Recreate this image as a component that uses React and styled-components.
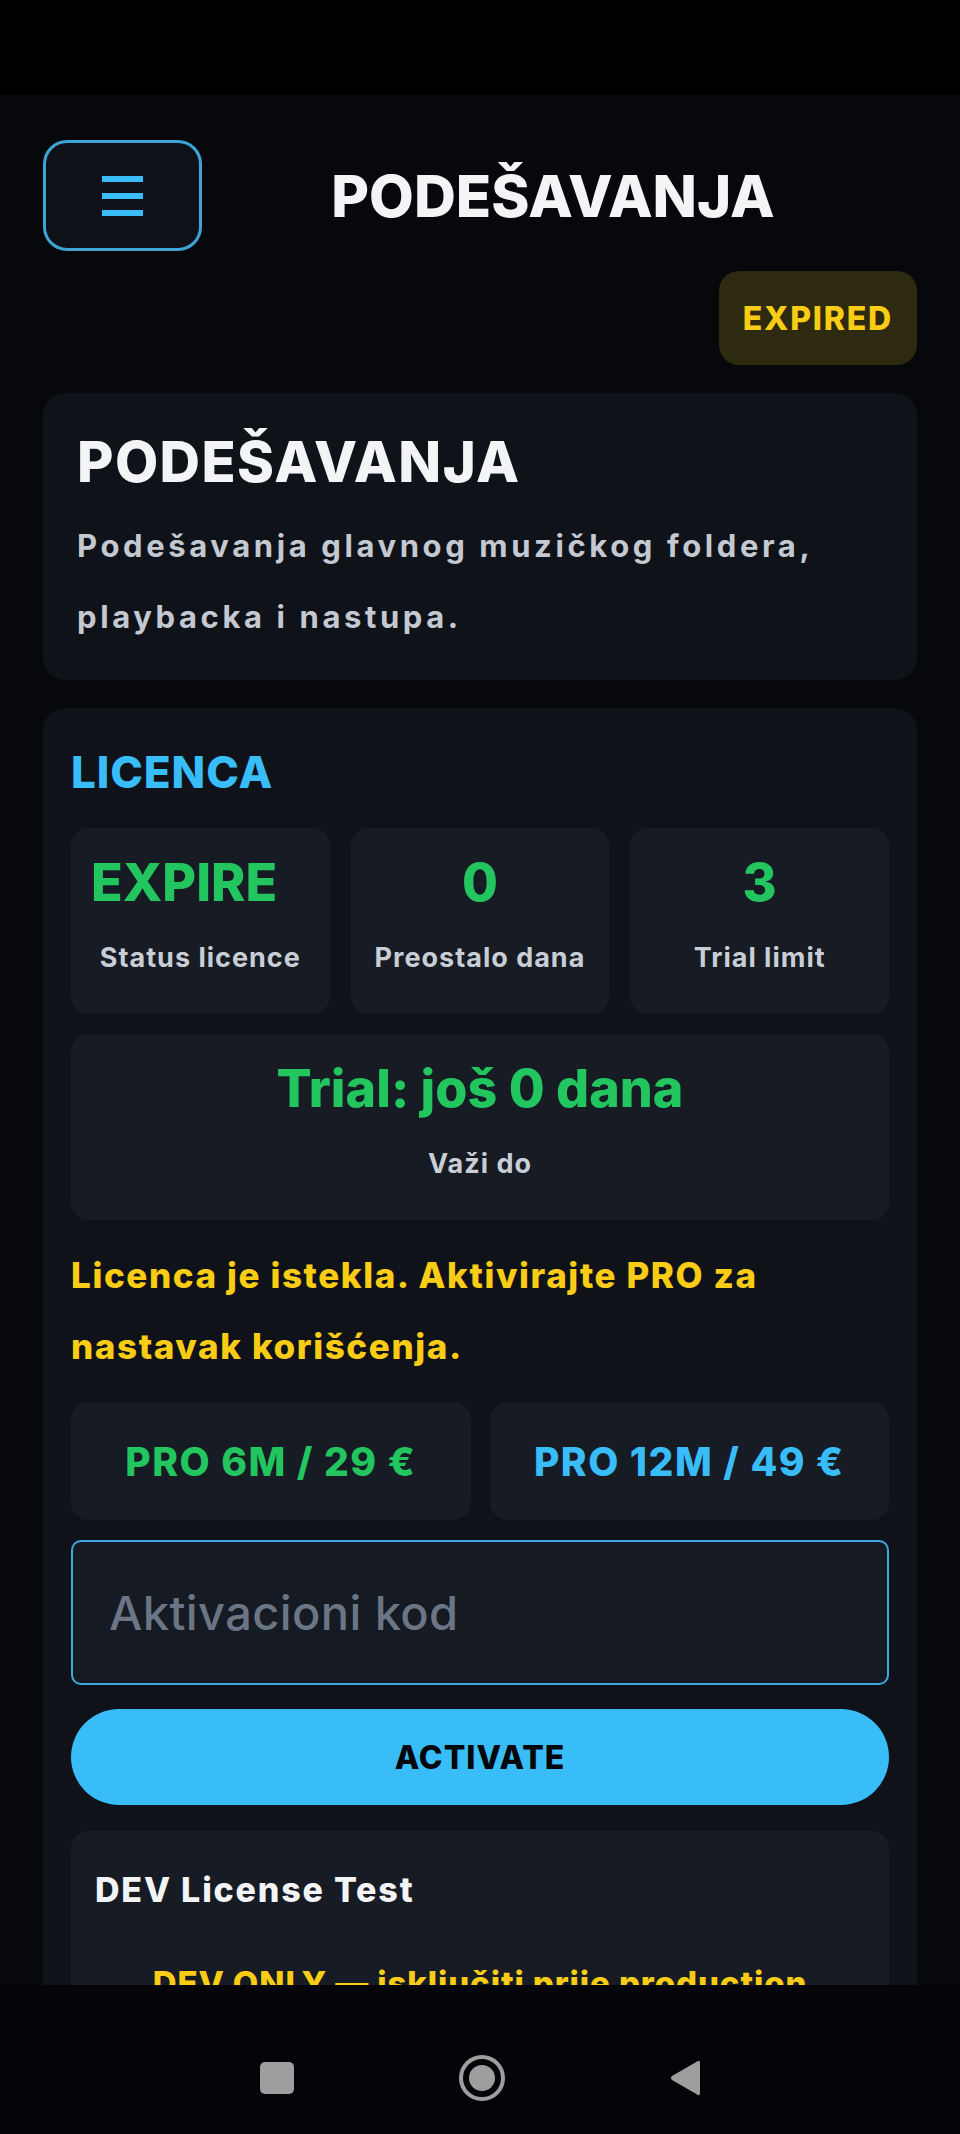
import styled, { createGlobalStyle } from "styled-components";

const GlobalStyle = createGlobalStyle`
  html, body {
    margin: 0;
    padding: 0;
    background: #000;
  }
  body {
    font-family: Inter, "Noto Sans", sans-serif;
  }
  * {
    box-sizing: border-box;
  }
`;

const Screen = styled.div`
  width: 960px;
  height: 2134px;
  display: flex;
  flex-direction: column;
  background: #000;
  overflow: hidden;
`;

const StatusBar = styled.div`
  flex: none;
  height: 95px;
  background: #000;
`;

const Viewport = styled.main`
  flex: 1;
  min-height: 0;
  overflow: hidden;
  background: #06080b;
  padding: 45px 43px 0;
`;

const Header = styled.header`
  display: flex;
  align-items: center;
`;

const MenuButton = styled.button`
  flex: none;
  width: 159px;
  height: 111px;
  padding: 0;
  border: 3px solid #3ea4d6;
  border-radius: 24px;
  background: #0e1218;
  display: flex;
  flex-direction: column;
  align-items: center;
  justify-content: center;
  gap: 11px;
`;

const MenuLine = styled.span`
  width: 41px;
  height: 6px;
  background: #38bdf8;
`;

const HeaderTitle = styled.h1`
  flex: 1;
  margin: 0;
  padding-right: 13px;
  text-align: center;
  font-size: 58px;
  line-height: 70px;
  font-weight: 800;
  color: #f3f4f6;
`;

const BadgeRow = styled.div`
  display: flex;
  justify-content: flex-end;
  margin-top: 20px;
`;

const Badge = styled.span`
  height: 94px;
  padding: 0 24px;
  display: flex;
  align-items: center;
  border-radius: 20px;
  background: #2d2a0f;
  color: #facc15;
  font-size: 32px;
  font-weight: 800;
  letter-spacing: 1.8px;
`;

const Card = styled.section`
  margin-top: 28px;
  background: #0f1319;
  border-radius: 22px;
  padding: ${({ $pad }) => $pad};
`;

const PageHeading = styled.h2`
  margin: 0;
  font-size: 56px;
  line-height: 68px;
  font-weight: 800;
  letter-spacing: 1.4px;
  color: #f3f4f6;
`;

const PageText = styled.p`
  margin: 14px 0 0;
  font-size: 31px;
  line-height: 71px;
  font-weight: 700;
  letter-spacing: 3.6px;
  color: #c3c8d1;
`;

const SectionTitle = styled.h3`
  margin: 0 0 30px;
  font-size: 44px;
  line-height: 52px;
  font-weight: 800;
  letter-spacing: 0.9px;
  color: #38bdf8;
`;

const Stack = styled.div`
  display: flex;
  flex-direction: column;
  gap: 20px;
`;

const StatGrid = styled.div`
  display: grid;
  grid-template-columns: repeat(3, 1fr);
  gap: 21px;
`;

const Tile = styled.div`
  background: #161b24;
  border-radius: 18px;
  padding: 25px 20px 36px;
  display: flex;
  flex-direction: column;
  gap: 25px;
  text-align: center;
`;

const StatValue = styled.div`
  font-size: 52px;
  line-height: 60px;
  font-weight: 800;
  color: #22c55e;
  text-align: ${({ $align }) => $align || "center"};
`;

const StatLabel = styled.div`
  font-size: 27px;
  line-height: 40px;
  font-weight: 700;
  letter-spacing: 1px;
  color: #c9ced6;
  white-space: nowrap;
`;

const Warning = styled.p`
  margin: 0;
  font-size: 35px;
  line-height: 71px;
  font-weight: 800;
  letter-spacing: 1.6px;
  color: #facc15;
`;

const PlanRow = styled.div`
  display: grid;
  grid-template-columns: 1fr 1fr;
  gap: 19px;
`;

const PlanButton = styled.button`
  height: 118px;
  border: none;
  border-radius: 18px;
  background: #161b24;
  font-family: inherit;
  font-size: 39px;
  font-weight: 800;
  letter-spacing: 1.5px;
  color: ${({ $color }) => $color};
`;

const CodeInput = styled.input`
  height: 145px;
  width: 100%;
  padding: 0 36px;
  border: 2px solid #3aa9de;
  border-radius: 10px;
  background: #151a23;
  font-family: inherit;
  font-size: 47px;
  font-weight: 500;
  letter-spacing: 0.4px;
  color: #e5e7eb;
  outline: none;

  &::placeholder {
    color: #6b7583;
  }
`;

const ActivateButton = styled.button`
  margin-top: 4px;
  height: 96px;
  border: none;
  border-radius: 48px;
  background: #38bdf8;
  font-family: inherit;
  font-size: 32px;
  font-weight: 800;
  letter-spacing: 1px;
  color: #03060a;
`;

const DevBox = styled.div`
  margin-top: 6px;
  background: #161b24;
  border-radius: 18px;
  padding: 36px 24px 40px;
`;

const DevTitle = styled.div`
  font-size: 34px;
  line-height: 46px;
  font-weight: 800;
  letter-spacing: 1.8px;
  color: #f3f4f6;
`;

const DevNote = styled.div`
  margin-top: 48px;
  text-align: center;
  font-size: 33px;
  line-height: 44px;
  font-weight: 800;
  letter-spacing: 0.9px;
  color: #facc15;
`;

const NavBar = styled.nav`
  flex: none;
  height: 149px;
  background: #050509;
  display: flex;
  align-items: center;
  justify-content: center;
  gap: 163px;
  padding-top: 37px;
`;

const NavIcon = styled.svg`
  display: block;
`;

function MenuIcon() {
  return (
    <MenuButton aria-label="Menu">
      <MenuLine />
      <MenuLine />
      <MenuLine />
    </MenuButton>
  );
}

export default function App() {
  return (
    <>
      <GlobalStyle />
      <Screen>
        <StatusBar />
        <Viewport>
          <Header>
            <MenuIcon />
            <HeaderTitle>PODEŠAVANJA</HeaderTitle>
          </Header>
          <BadgeRow>
            <Badge>EXPIRED</Badge>
          </BadgeRow>

          <Card $pad="35px 34px 28px">
            <PageHeading>PODEŠAVANJA</PageHeading>
            <PageText>
              Podešavanja glavnog muzičkog foldera, playbacka i nastupa.
            </PageText>
          </Card>

          <Card $pad="38px 28px 40px">
            <SectionTitle>LICENCA</SectionTitle>
            <Stack>
              <StatGrid>
                <Tile>
                  <StatValue $align="left">EXPIRE</StatValue>
                  <StatLabel>Status licence</StatLabel>
                </Tile>
                <Tile>
                  <StatValue>0</StatValue>
                  <StatLabel>Preostalo dana</StatLabel>
                </Tile>
                <Tile>
                  <StatValue>3</StatValue>
                  <StatLabel>Trial limit</StatLabel>
                </Tile>
              </StatGrid>
              <Tile>
                <StatValue>Trial: još 0 dana</StatValue>
                <StatLabel>Važi do</StatLabel>
              </Tile>
              <Warning>
                Licenca je istekla. Aktivirajte PRO za nastavak korišćenja.
              </Warning>
              <PlanRow>
                <PlanButton $color="#22c55e">PRO 6M / 29 €</PlanButton>
                <PlanButton $color="#38bdf8">PRO 12M / 49 €</PlanButton>
              </PlanRow>
              <CodeInput placeholder="Aktivacioni kod" />
              <ActivateButton>ACTIVATE</ActivateButton>
              <DevBox>
                <DevTitle>DEV License Test</DevTitle>
                <DevNote>DEV ONLY — isključiti prije production</DevNote>
              </DevBox>
            </Stack>
          </Card>
        </Viewport>
        <NavBar>
          <NavIcon width="36" height="34" viewBox="0 0 36 34">
            <rect x="1" y="1" width="34" height="32" rx="5" fill="#9e9e9e" />
          </NavIcon>
          <NavIcon width="48" height="48" viewBox="0 0 48 48">
            <circle cx="24" cy="24" r="21" fill="none" stroke="#9e9e9e" strokeWidth="4" />
            <circle cx="24" cy="24" r="13" fill="#9e9e9e" />
          </NavIcon>
          <NavIcon width="32" height="40" viewBox="0 0 32 40">
            <path
              d="M29 3 Q31 2 31 5 L31 35 Q31 38 29 37 L3 22 Q1 20 3 18 Z"
              fill="#9e9e9e"
            />
          </NavIcon>
        </NavBar>
      </Screen>
    </>
  );
}
